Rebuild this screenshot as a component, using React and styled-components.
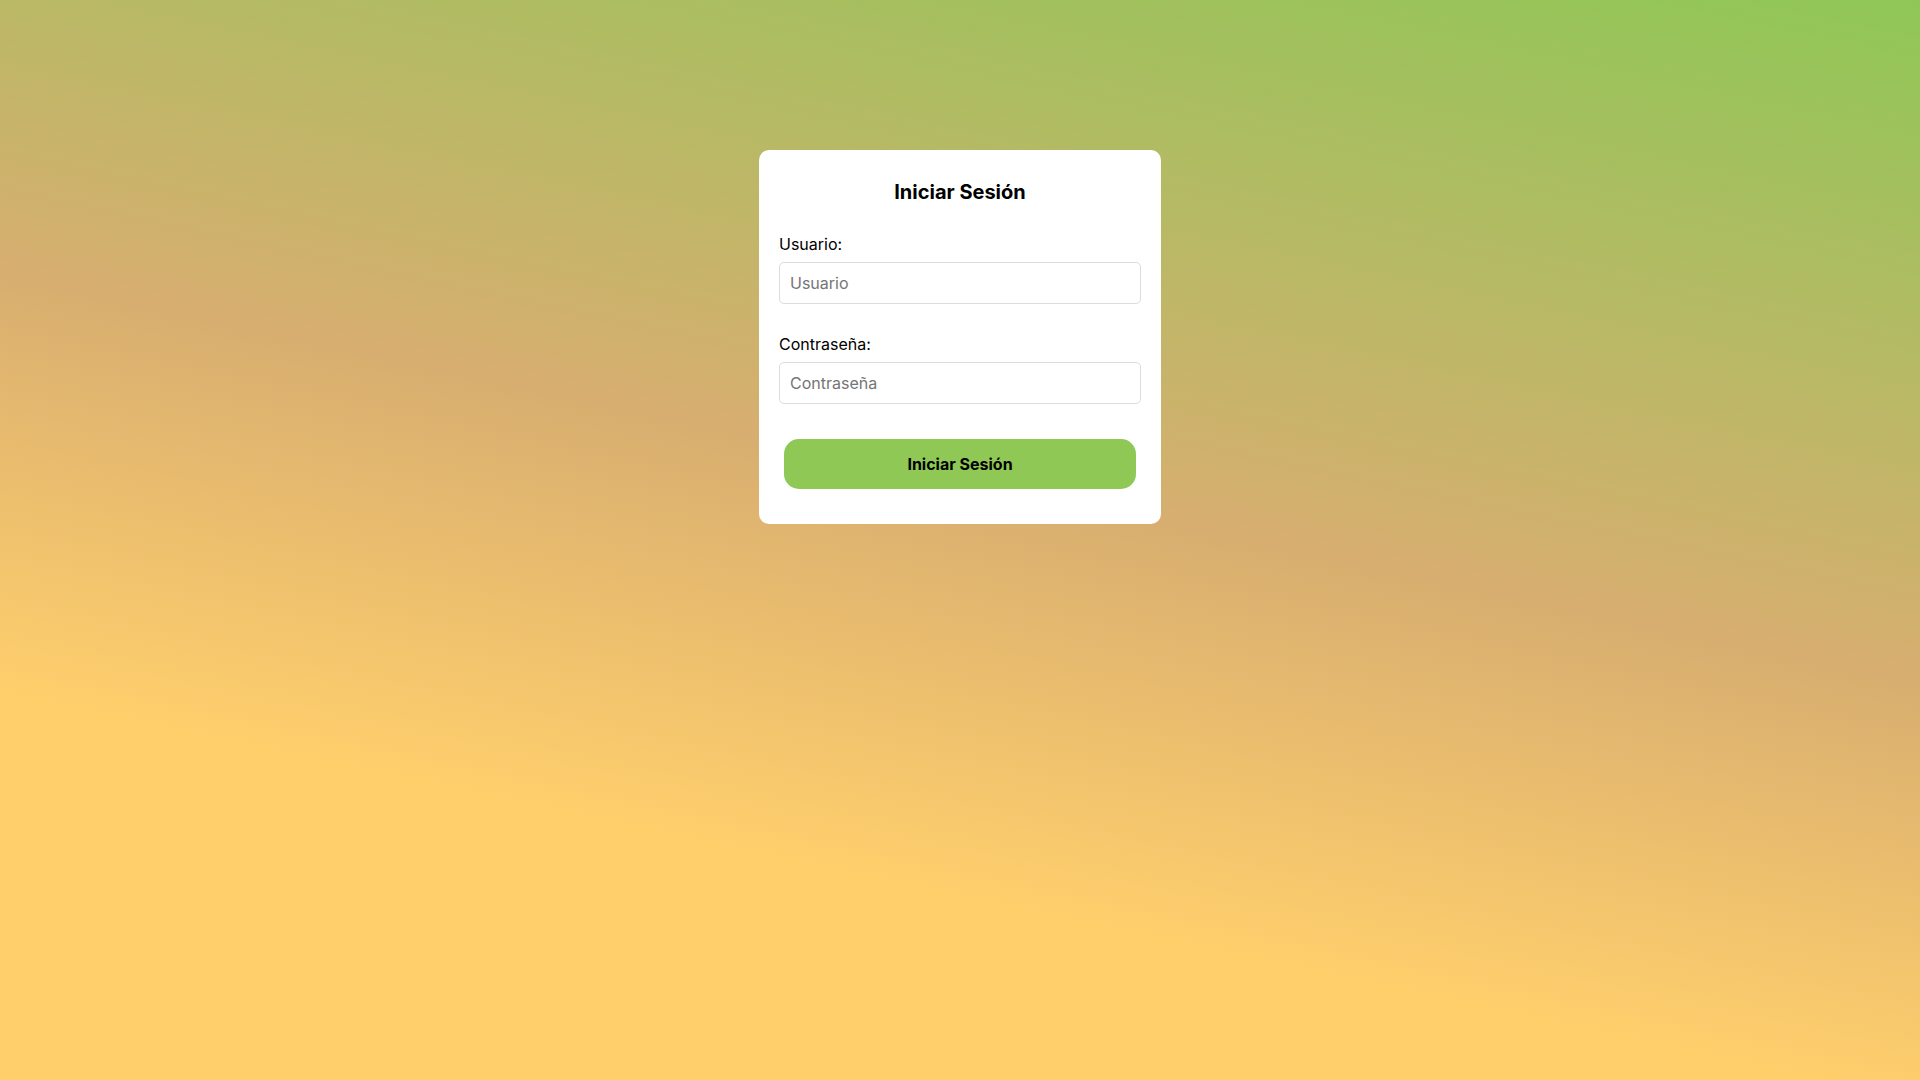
import React, { useState } from 'react'
import styled, { createGlobalStyle } from 'styled-components'

const GlobalStyle = createGlobalStyle`
  * {
    box-sizing: border-box;
  }
  html, body {
    margin: 0;
    padding: 0;
  }
  body {
    min-height: 100vh;
    font-family: Inter, "Noto Sans", "Liberation Sans", sans-serif;
    background: linear-gradient(12deg, #ffcf6c 26%, #d8ae70 54%, #8fc757 100%);
    background-attachment: fixed;
  }
`

const Page = styled.div`
  min-height: 100vh;
  display: flex;
  justify-content: center;
  align-items: flex-start;
  padding-top: 150px;
`

const Card = styled.form`
  width: 402px;
  background-color: #fff;
  border-radius: 10px;
  padding: 30px 20px 35px;
  display: flex;
  flex-direction: column;
`

const Title = styled.h2`
  margin: 0 0 30px;
  font-size: 20px;
  line-height: 24px;
  font-weight: 700;
  text-align: center;
  color: #000;
`

const Field = styled.div`
  display: flex;
  flex-direction: column;
  margin-bottom: 30px;
`

const Label = styled.label`
  display: block;
  font-size: 16px;
  line-height: 20px;
  color: #000;
  margin-bottom: 8px;
`

const Input = styled.input`
  width: 100%;
  height: 42px;
  padding: 0 10px;
  border: 1px solid #dddddd;
  border-radius: 5px;
  font-family: inherit;
  font-size: 16px;
  color: #000;
  outline: none;

  &::placeholder {
    color: #757575;
  }
`

const Button = styled.button`
  margin: 5px 5px 0;
  height: 50px;
  border: none;
  border-radius: 15px;
  background-color: #8fc855;
  color: #000;
  font-family: inherit;
  font-size: 16px;
  font-weight: 700;
  cursor: pointer;
`

const App = () => {
  const [usuario, setUsuario] = useState('')
  const [password, setPassword] = useState('')

  const handleSubmit = (e) => {
    e.preventDefault()
  }

  return (
    <>
      <GlobalStyle />
      <Page>
        <Card onSubmit={handleSubmit}>
          <Title>Iniciar Sesión</Title>
          <Field>
            <Label htmlFor="usuario">Usuario:</Label>
            <Input
              id="usuario"
              type="text"
              placeholder="Usuario"
              value={usuario}
              onChange={(e) => setUsuario(e.target.value)}
            />
          </Field>
          <Field>
            <Label htmlFor="password">Contraseña:</Label>
            <Input
              id="password"
              type="password"
              placeholder="Contraseña"
              value={password}
              onChange={(e) => setPassword(e.target.value)}
            />
          </Field>
          <Button type="submit">Iniciar Sesión</Button>
        </Card>
      </Page>
    </>
  )
}

export default App
